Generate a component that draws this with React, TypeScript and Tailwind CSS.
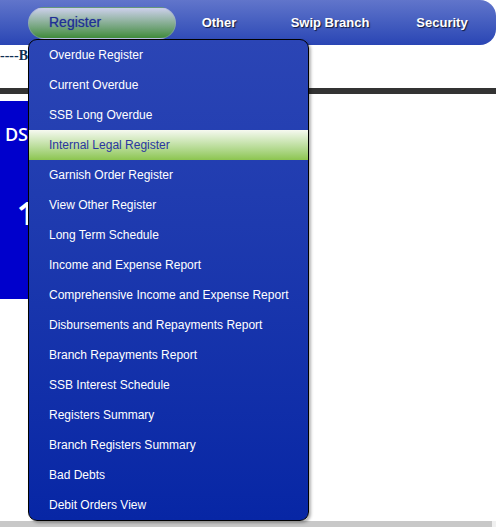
const items = [
  'Overdue Register',
  'Current Overdue',
  'SSB Long Overdue',
  'Internal Legal Register',
  'Garnish Order Register',
  'View Other Register',
  'Long Term Schedule',
  'Income and Expense Report',
  'Comprehensive Income and Expense Report',
  'Disbursements and Repayments Report',
  'Branch Repayments Report',
  'SSB Interest Schedule',
  'Registers Summary',
  'Branch Registers Summary',
  'Bad Debts',
  'Debit Orders View',
];

const ACTIVE = 'Internal Legal Register';

function NavItem({ label, width }: { label: string; width: string }) {
  return (
    <div className={`${width} flex items-center justify-center h-full`}>
      <span className="text-white text-[13px] font-bold [text-shadow:1px_1px_1px_rgba(0,0,0,0.7)]">{label}</span>
    </div>
  );
}

export default function App() {
  return (
    <div className="relative w-[496px] h-[527px] bg-white overflow-hidden font-['Liberation_Sans',Arial,sans-serif]">
      <div className="flex flex-col h-full">
        <nav className="h-[45px] w-full flex items-center rounded-r-[16px] bg-gradient-to-b from-[#6175cb] to-[#2a45b4]">
          <div className="ml-[28px] w-[148px] h-[32px] rounded-full bg-gradient-to-b from-[#cdd0ec] to-[#3f8b3a] flex items-center pl-[20px] border border-[#9aa6d8]/40">
            <span className="text-[#1f2f96] text-[14px] [text-shadow:0_0_1px_rgba(31,47,150,0.6)]">Register</span>
          </div>
          <NavItem label="Other" width="w-[86px]" />
          <NavItem label="Swip Branch" width="w-[136px]" />
          <NavItem label="Security" width="w-[88px]" />
        </nav>

        <div className="flex-1 flex flex-col">
          <div className="w-[29px] h-[20px] mt-[1px] whitespace-nowrap font-['Liberation_Serif',serif] font-bold text-[14px] leading-[20px] text-[#0f2f52]">
            ----B
          </div>
          <div className="h-[6px] mt-[22px] bg-[#333333]" />
          <div className="mt-[7px] w-[120px] h-[198px] bg-[#0000cc] flex flex-col text-white font-['Open_Sans',sans-serif]">
            <div className="w-[28px] mt-[24px] flex justify-end text-[18px] font-semibold leading-none">DS</div>
            <div className="ml-[17px] mt-[53px] text-[33px] font-bold leading-none">1</div>
          </div>
        </div>

        <div className="h-[6px] w-full flex">
          <div className="flex-1 bg-[#c8c8c8]" />
          <div className="w-[4px] bg-[#f0f0f0]" />
        </div>
      </div>

      <div className="absolute left-[28px] top-[39px] w-[281px] rounded-[9px] border border-black bg-gradient-to-b from-[#2b45b5] to-[#0726a5] shadow-[2px_2px_3px_rgba(0,0,0,0.3)] overflow-hidden">
        {items.map((item) => (
          <div
            key={item}
            className={
              item === ACTIVE
                ? 'h-[30px] flex items-center pl-[20px] text-[12px] text-[#2a36a0] bg-gradient-to-b from-[#f6f9f0] to-[#8cc54e]'
                : 'h-[30px] flex items-center pl-[20px] text-[12px] text-white'
            }
          >
            {item}
          </div>
        ))}
      </div>
    </div>
  );
}
